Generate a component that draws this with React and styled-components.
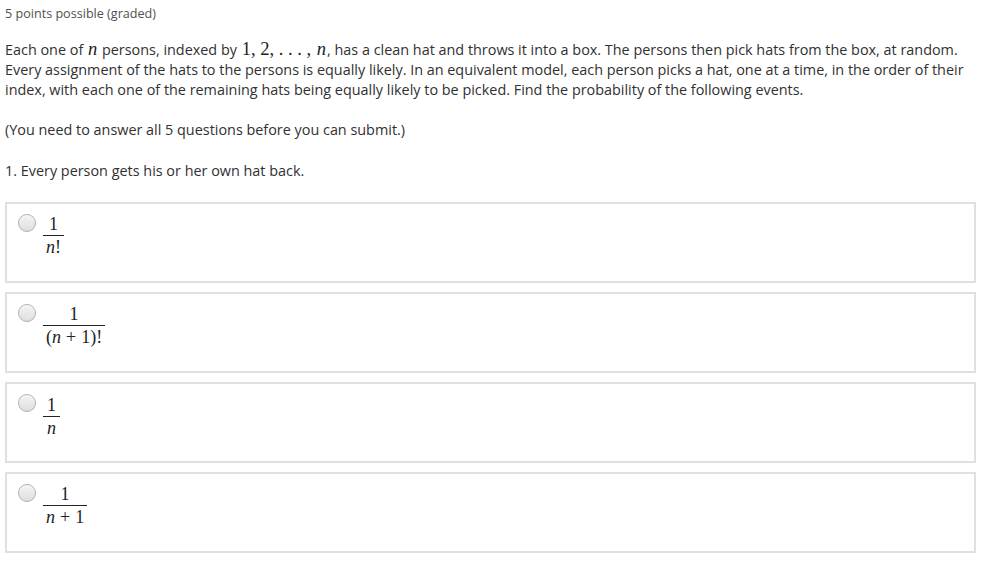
import React from "react";
import styled, { createGlobalStyle } from "styled-components";

const Global = createGlobalStyle`
  html, body { margin: 0; padding: 0; background: #fff; }
  body { font-family: "Open Sans", "Liberation Sans", sans-serif; color: #313131; }
`;

const Page = styled.div`
  padding: 5px 8px 0 5px;
`;

const Points = styled.div`
  font-size: 12.6px;
  line-height: 18px;
  color: #505050;
`;

const Para = styled.p`
  margin: ${(p) => p.$top || 17}px 0 0;
  font-size: 14.4px;
  line-height: 20px;
`;

const M = styled.span`
  font-family: "Liberation Serif", "DejaVu Serif", serif;
  font-size: 18.5px;
  font-style: ${(p) => (p.$up ? "normal" : "italic")};
  line-height: 1;
  color: #222;
  padding: 0 1px;
`;

const Options = styled.div`
  margin-top: 21px;
  display: flex;
  flex-direction: column;
  gap: 9px;
`;

const Option = styled.label`
  box-sizing: border-box;
  height: 81px;
  border: 2px solid #e0e0e0;
  display: flex;
  align-items: flex-start;
  padding: 10px 0 0 11px;
  gap: 7px;
`;

const Radio = styled.span`
  box-sizing: border-box;
  flex: none;
  width: 18px;
  height: 18px;
  border-radius: 50%;
  border: 1px solid #b0b0b0;
  background: linear-gradient(180deg, #f4f4f4 0%, #dedede 100%);
  box-shadow: inset 0 1px 1px rgba(255,255,255,0.8);
`;

const Frac = styled.span`
  display: inline-flex;
  flex-direction: column;
  align-items: center;
  font-family: "Liberation Serif", "DejaVu Serif", serif;
  font-size: 18px;
  line-height: 19px;
  color: #222;
  margin-top: ${(p) => p.$mt || 0}px;
`;

const Num = styled.span`
  padding: 0 4px 1px;
  border-bottom: 1px solid #222;
  align-self: stretch;
  text-align: center;
`;

const Den = styled.span`
  padding: 2px 3px 0;
  white-space: nowrap;
`;

const I = styled.i`
  font-style: italic;
`;

const Op = styled.span`
  padding: 0 5px;
`;

export default function App() {
  return (
    <Page>
      <Global />
      <Points>5 points possible (graded)</Points>
      <Para>
        Each one of <M>n</M> persons, indexed by <M $up>1, 2, . . . ,</M> <M>n</M>, has a clean hat and throws it into a box. The persons then pick hats from the box, at random. Every assignment of the hats to the persons is equally likely. In an equivalent model, each person picks a hat, one at a time, in the order of their index, with each one of the remaining hats being equally likely to be picked. Find the probability of the following events.
      </Para>
      <Para $top={20}>(You need to answer all 5 questions before you can submit.)</Para>
      <Para $top={21}>1. Every person gets his or her own hat back.</Para>
      <Options>
        <Option>
          <Radio />
          <Frac $mt={1}>
            <Num>1</Num>
            <Den><I>n</I>!</Den>
          </Frac>
        </Option>
        <Option>
          <Radio />
          <Frac $mt={1}>
            <Num>1</Num>
            <Den>(<I>n</I><Op>+</Op>1)!</Den>
          </Frac>
        </Option>
        <Option>
          <Radio />
          <Frac $mt={2}>
            <Num>1</Num>
            <Den><I>n</I></Den>
          </Frac>
        </Option>
        <Option>
          <Radio />
          <Frac $mt={1}>
            <Num>1</Num>
            <Den><I>n</I><Op>+</Op>1</Den>
          </Frac>
        </Option>
      </Options>
    </Page>
  );
}
